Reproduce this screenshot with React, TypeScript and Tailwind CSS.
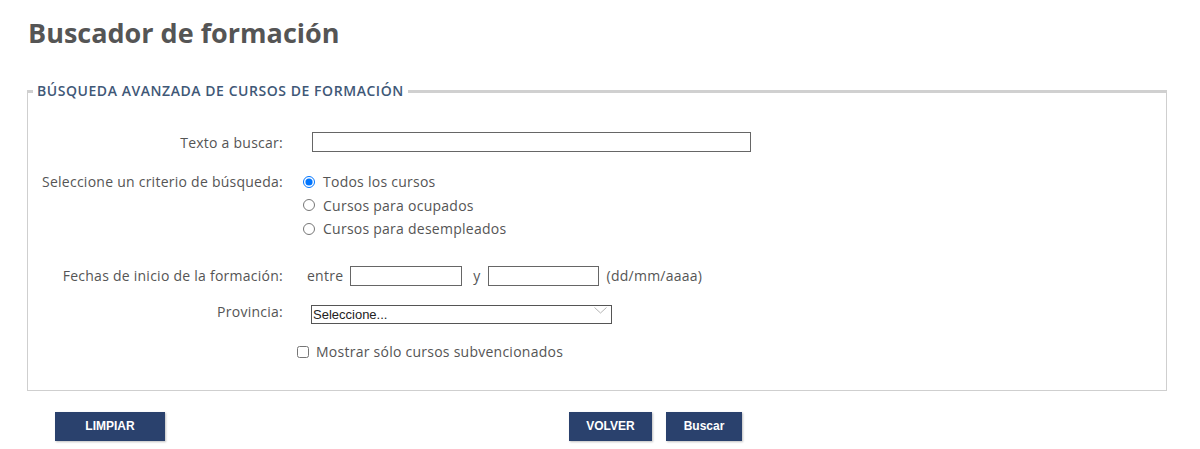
import React from 'react';

const labelCls = 'w-[250px] shrink-0 text-right text-[14px] tracking-[0.25px] text-[#555]';

export default function App() {
  const [criterio, setCriterio] = React.useState('todos');

  return (
    <div className="min-h-[449px] bg-white px-[27px] pt-[14px] font-['Open_Sans',sans-serif] text-[#555]">
      <h1 className="ml-[1px] text-[27px] font-bold leading-[38px] text-[#555]">Buscador de formación</h1>

      <fieldset className="mt-[30px] w-[1140px] border border-t-[3px] border-[#cfcfcf] border-t-[#d0d0d0] px-[5px] pb-[28px]">
        <legend className="px-[4px] text-[14px] font-semibold uppercase leading-[18px] tracking-[0.55px] text-[#3f5877]">
          Búsqueda avanzada de cursos de formación
        </legend>

        <div className="flex flex-col">
          {/* texto */}
          <div className="mt-[32px] flex h-[20px] items-center">
            <label className={labelCls}>Texto a buscar:</label>
            <input type="text" className="ml-[29px] h-[20px] w-[439px] border border-[#666] bg-white outline-none" />
          </div>

          {/* criterio */}
          <div className="mt-[18px] flex items-start">
            <span className={`${labelCls} leading-[23px]`}>Seleccione un criterio de búsqueda:</span>
            <div className="ml-[20px] flex flex-col">
              {[
                ['todos', 'Todos los cursos'],
                ['ocupados', 'Cursos para ocupados'],
                ['desempleados', 'Cursos para desempleados'],
              ].map(([value, text]) => (
                <label key={value} className="flex h-[23.5px] items-center text-[14px] tracking-[0.25px] text-[#555]">
                  <input
                    type="radio"
                    name="criterio"
                    checked={criterio === value}
                    onChange={() => setCriterio(value)}
                    className="m-0 h-[12px] w-[12px] accent-[#0075ff]"
                  />
                  <span className="ml-[8px]">{text}</span>
                </label>
              ))}
            </div>
          </div>

          {/* fechas */}
          <div className="mt-[25px] flex h-[20px] items-center text-[14px] tracking-[0.25px]">
            <span className={labelCls}>Fechas de inicio de la formación:</span>
            <span className="ml-[24px]">entre</span>
            <input type="text" className="ml-[7px] h-[20px] w-[112px] border border-[#666] bg-white outline-none" />
            <span className="ml-[11px]">y</span>
            <input type="text" className="ml-[7px] h-[20px] w-[111px] border border-[#666] bg-white outline-none" />
            <span className="ml-[8px]">(dd/mm/aaaa)</span>
          </div>

          {/* provincia */}
          <div className="mt-[15px] flex h-[19px] items-center">
            <label className={`${labelCls} pt-[2px]`}>Provincia:</label>
            <div className="relative ml-[28px] h-[19px] w-[301px]">
              <select className="h-[19px] w-full appearance-none border border-[#555] bg-white pl-[1px] font-['Liberation_Sans',sans-serif] text-[13px] leading-[17px] text-[#222] outline-none">
                <option>Seleccione...</option>
              </select>
              <svg className="pointer-events-none absolute right-[5px] top-[6px]" width="13" height="7" viewBox="0 0 13 7" fill="none">
                <path d="M0.5 0.5 6.5 6 12.5 0.5" stroke="#b5b5b5" strokeWidth="1" />
              </svg>
            </div>
          </div>

          {/* subvencionados */}
          <label className="ml-[264px] mt-[22px] flex h-[20px] items-center text-[14px] tracking-[0.25px] text-[#555]">
            <input type="checkbox" className="m-0 h-[12px] w-[12px]" />
            <span className="ml-[7px]">Mostrar sólo cursos subvencionados</span>
          </label>
        </div>
      </fieldset>

      <div className="mt-[21px] flex items-center font-['Liberation_Sans',sans-serif] text-[12px] font-bold text-white">
        <button className="ml-[28px] h-[29px] w-[110px] bg-[#2a416d] shadow-[1px_1px_2px_rgba(0,0,0,0.25)]">LIMPIAR</button>
        <button className="ml-[404px] h-[29px] w-[83px] bg-[#2a416d] shadow-[1px_1px_2px_rgba(0,0,0,0.25)]">VOLVER</button>
        <button className="ml-[14px] h-[29px] w-[76px] bg-[#2a416d] shadow-[1px_1px_2px_rgba(0,0,0,0.25)]">Buscar</button>
      </div>
    </div>
  );
}
